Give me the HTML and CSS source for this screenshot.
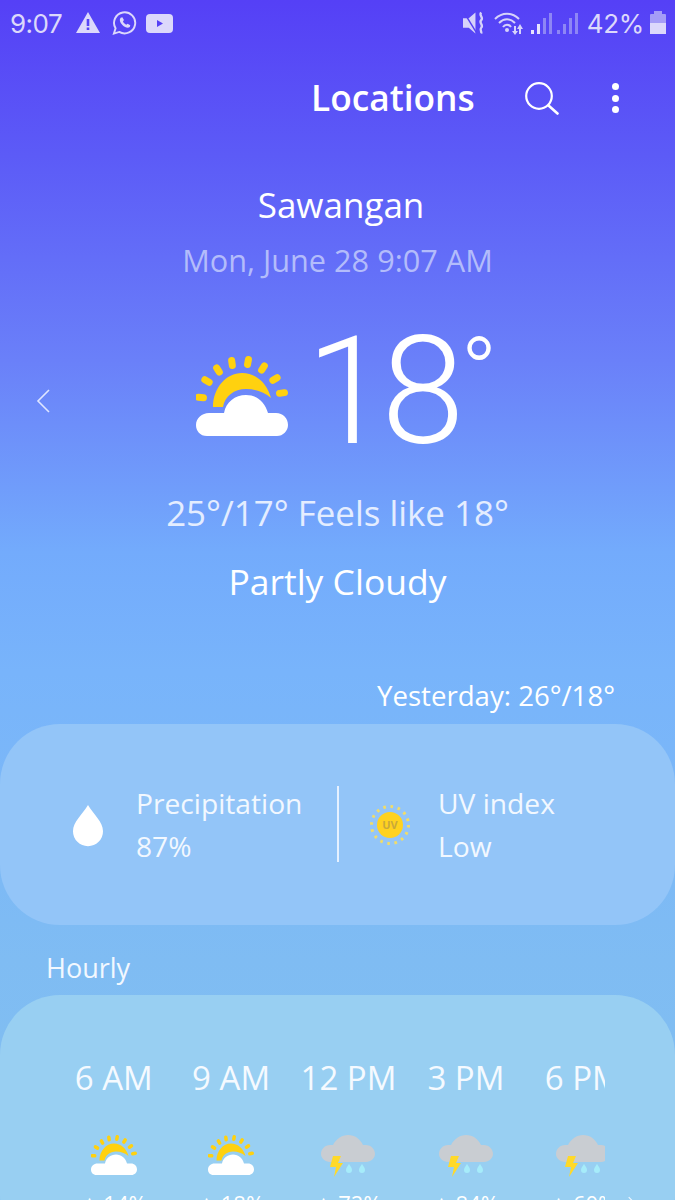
FILE: index.html
```html
<!DOCTYPE html>
<html lang="en">
<head>
<meta charset="utf-8">
<title>Weather</title>
<link rel="stylesheet" href="styles.css">
</head>
<body>
<svg class="defs" width="0" height="0" aria-hidden="true">
  <defs>
    <symbol id="partly" viewBox="0 0 92 80">
      <g fill="#ffd10f">
        <rect x="-1" y="38" width="12" height="7" rx="3.5" transform="rotate(5 5 41)"/>
        <rect x="5" y="21.500" width="12" height="7" rx="3.5" transform="rotate(30 11 25)"/>
        <rect x="16" y="10.500" width="12" height="7" rx="3.5" transform="rotate(58 22 14)"/>
        <rect x="30" y="3.500" width="12" height="7" rx="3.5" transform="rotate(82 36 7)"/>
        <rect x="46" y="2.500" width="12" height="7" rx="3.5" transform="rotate(-80 52 6)"/>
        <rect x="61" y="8.500" width="12" height="7" rx="3.5" transform="rotate(-57 67 12)"/>
        <rect x="73" y="19.500" width="12" height="7" rx="3.500" transform="rotate(-32 79 23)"/>
        <rect x="80" y="33.500" width="12" height="7" rx="3.500" transform="rotate(-8 86 37)"/>
        <path d="M17 51C17 32 30 17 46 17C60 17 71 27 75 42C68 36 60 33 50 33C38 33 29 40 27 51Z"/>
      </g>
      <path fill="#fff" d="M11 80C4 80 0 75 0 69C0 62 6 57 13 57H28C30 46 39 39 50 39C61 39 69 46 72 57H80C87 57 92 62 92 69C92 75 87 80 81 80Z"/>
    </symbol>
    <symbol id="storm" viewBox="0 0 54 42">
      <path fill="#c9cdd2" d="M9 27C4 27 0 23 0 19C0 14 4 10 9 10H12C15 4 21 0 27 0C34 0 39 4 42 10H45C50 10 54 14 54 19C54 23 50 27 45 27Z"/>
      <path fill="#ffd92a" d="M12 21H20L17 28H22L13 42L15 32H9Z"/>
      <path fill="#a6ecfa" d="M28 29C30 32 31 33 31 35A3 3 0 0 1 25 35C25 33 26 32 28 29ZM41 29C43 32 44 33 44 35A3 3 0 0 1 38 35C38 33 39 32 41 29Z"/>
    </symbol>
  </defs>
</svg>
<main class="screen">
  <header class="status">
    <div class="status-left">
      <span class="clock">9:07</span>
      <svg class="s-icon alert" viewBox="0 0 24 22"><path fill="#dcd8fb" fill-rule="evenodd" d="M12 0L24 21H0ZM10.700 7V14H13.300V7ZM10.700 15.500V18H13.300V15.500Z"/></svg>
      <svg class="s-icon wa" viewBox="0 0 26 26"><path fill="none" stroke="#dcd8fb" stroke-width="2" d="M2 24L3.700 18.500A11 11 0 1 1 7.500 22.300Z"/><path fill="#dcd8fb" d="M9 7.500L10.800 7L12.400 10L11.400 11.400C12 12.800 13.200 14 14.800 14.800L16.200 13.700L19 15.400L18.500 17.200C16.800 18.800 13.600 18 10.800 15.200C8 12.400 7.400 9.200 9 7.500Z"/></svg>
      <svg class="s-icon yt" viewBox="0 0 27 19"><rect width="27" height="19" rx="4" fill="#dcd8fb"/><path fill="#5540f5" d="M11 6L17 9.500L11 13Z"/></svg>
    </div>
    <div class="status-right">
      <svg class="s-icon mute" viewBox="0 0 24 24"><path fill="#d6d2fa" d="M0 7H6L13 1V23L6 17H0Z"/><path stroke="#5540f5" stroke-width="1.500" d="M1 1L14 22"/><path fill="none" stroke="#d6d2fa" stroke-width="2.400" d="M19 1C16 4 22 6 19 9C16 12 22 14 19 17C17 19 20 21 19 23"/></svg>
      <svg class="s-icon wifi" viewBox="0 0 30 24"><g fill="none" stroke="#d6d2fa" stroke-width="2"><path d="M1 8C8 1 18 1 25 8"/><path d="M5 12C10 7 16 7 21 12"/><path d="M9 16C11 13 15 13 17 16"/></g><circle cx="13" cy="19" r="2" fill="#d6d2fa"/><path fill="#d6d2fa" d="M20 15H22V20H24L21 24L18 20H20ZM26 13L29 18H27V23H25V18H23Z"/></svg>
      <span class="bars"><i class="b1 on"></i><i class="b2 on"></i><i class="b3"></i><i class="b4"></i></span>
      <span class="bars"><i class="b1"></i><i class="b2"></i><i class="b3"></i><i class="b4"></i></span>
      <span class="pct">42%</span>
      <span class="battery"><i></i></span>
    </div>
  </header>

  <nav class="toolbar">
    <span class="toolbar-title">Locations</span>
    <svg class="search" viewBox="0 0 34 33"><circle cx="14" cy="14" r="12.800" fill="none" stroke="#fff" stroke-width="2.200"/><path d="M23.500 23.500L32.500 31.500" stroke="#fff" stroke-width="2.600" stroke-linecap="round"/></svg>
    <span class="dots"><i></i><i></i><i></i></span>
  </nav>

  <section class="hero">
    <h1 class="city">Sawangan</h1>
    <p class="date">Mon, June 28 9:07 AM</p>
    <div class="now">
      <svg class="chev" viewBox="0 0 14 24"><path d="M13 1L2 12L13 23" fill="none" stroke="#dfe6ff" stroke-width="1.600"/></svg>
      <svg class="now-icon"><use href="#partly"/></svg>
      <span class="temp"><span>18</span><span class="deg">°</span></span>
    </div>
    <p class="feels">25°/17° Feels like 18°</p>
    <p class="cond">Partly Cloudy</p>
    <p class="yesterday">Yesterday: 26°/18°</p>
  </section>

  <section class="card stats">
    <div class="stat stat-a">
      <svg class="drop" viewBox="0 0 32 44"><path fill="#fff" d="M16 0C22 10 32 18 32 28A16 16 0 0 1 0 28C0 18 10 10 16 0Z"/></svg>
      <div class="stat-text"><span>Precipitation</span><span>87%</span></div>
    </div>
    <div class="stat stat-b">
      <span class="uv"><svg class="uv-rays" viewBox="0 0 40 40"><circle cx="20" cy="20" r="18.500" fill="none" stroke="#f0dc6a" stroke-width="3" stroke-dasharray="2.600 4.660"/></svg><b>UV</b></span>
      <div class="stat-text"><span>UV index</span><span>Low</span></div>
    </div>
  </section>

  <h2 class="hourly-label">Hourly</h2>

  <section class="card hourly">
    <div class="hours">
      <div class="hour"><span class="h-time">6 AM</span><svg class="h-icon h-sun"><use href="#partly"/></svg><span class="h-rain">&#9651; 14%</span></div>
      <div class="hour"><span class="h-time">9 AM</span><svg class="h-icon h-sun"><use href="#partly"/></svg><span class="h-rain">&#9651; 18%</span></div>
      <div class="hour"><span class="h-time">12 PM</span><svg class="h-icon"><use href="#storm"/></svg><span class="h-rain">&#9651; 72%</span></div>
      <div class="hour"><span class="h-time">3 PM</span><svg class="h-icon"><use href="#storm"/></svg><span class="h-rain">&#9651; 84%</span></div>
      <div class="hour"><span class="h-time">6 PM</span><svg class="h-icon"><use href="#storm"/></svg><span class="h-rain">&#9651; 60%</span></div>
    </div>
    <svg class="more" viewBox="0 0 14 24"><path d="M1 1L12 12L1 23" fill="none" stroke="#eef7ff" stroke-width="1.600"/></svg>
  </section>
</main>
</body>
</html>
```

FILE: styles.css
```css
* { box-sizing: border-box; }
html, body { margin: 0; padding: 0; }
body { width: 675px; height: 1200px; overflow: hidden; font-family: "Open Sans", "Noto Sans", sans-serif; color: #fff; }
.defs { display: block; height: 0; }
p, h1, h2 { margin: 0; font-weight: 400; }
.screen {
  width: 675px; height: 1200px; overflow: hidden; display: flex; flex-direction: column;
  background: linear-gradient(180deg, #5540f6 0%, #5c5bf7 13%, #6a80f9 30%, #73abfc 46%, #78b4fb 56%, #7fbcf3 80%, #82c0f0 100%);
}
.status { height: 44px; flex: none; display: flex; justify-content: space-between; align-items: center; padding: 2px 9px 0 10px; color: #dcd8fb; }
.status-left, .status-right { display: flex; align-items: center; }
.clock { font-family: Inter, sans-serif; font-size: 26px; letter-spacing: -0.5px; margin-right: 14px; }
.s-icon { display: block; flex: none; }
.alert { width: 24px; height: 22px; margin-right: 12px; }
.wa { width: 25px; height: 26px; margin-right: 9px; }
.yt { width: 27px; height: 19px; }
.mute { width: 23px; height: 24px; margin-right: 8px; }
.wifi { width: 30px; height: 24px; }
.bars { display: flex; align-items: flex-end; gap: 3px; height: 21px; margin-left: 7px; width: 21px; }
.bars + .bars { margin-left: 5px; }
.bars i { display: block; width: 3px; background: #8e86f5; }
.bars i.on { background: #e6e3fd; }
.b1 { height: 4px; } .b2 { height: 10px; } .b3 { height: 16px; } .b4 { height: 21px; }
.pct { font-family: Inter, sans-serif; font-size: 26px; letter-spacing: -0.3px; margin-left: 9px; }
.battery { display: block; position: relative; width: 16px; height: 20px; margin: 1px 0 0 6px; background: #a59df7; border-radius: 1px; }
.battery::before { content: ""; position: absolute; left: 4px; top: -3px; width: 8px; height: 3px; background: #a59df7; }
.battery i { position: absolute; left: 0; right: 0; bottom: 0; height: 11px; background: #dcd8fb; }

.toolbar { height: 108px; flex: none; display: flex; align-items: center; padding-left: 311px; }
.toolbar-title { flex: 0 0 163px; font-size: 35.3px; font-weight: 600; line-height: 1; margin-right: 51px; white-space: nowrap; min-width: 0; }
.search { width: 34px; height: 33px; margin-right: 53px; }
.dots { display: flex; flex-direction: column; gap: 4.5px; }
.dots i { display: block; width: 7px; height: 7px; border-radius: 50%; background: #fff; }

.hero { display: flex; flex-direction: column; align-items: center; flex: none; }
.city { font-size: 35px; line-height: 48px; margin: 29px 0 0 7px; }
.date { font-size: 30.7px; line-height: 40px; margin-top: 11px; color: #b3bcfb; }
.now { position: relative; width: 100%; height: 120px; margin-top: 50px; }
.chev { position: absolute; left: 36px; top: 59px; width: 14px; height: 24px; }
.now-icon { position: absolute; left: 196px; top: 26px; width: 92px; height: 80px; }
.temp { position: absolute; left: 306px; top: -33px; display: flex; align-items: flex-start; font-family: Roboto, sans-serif; font-size: 150px; line-height: 190px; font-weight: 300; letter-spacing: -8px; white-space: nowrap; }
.deg { font-size: 98px; line-height: 110px; letter-spacing: 0; margin: 22px 0 0 4px; }
.feels { font-size: 34.9px; line-height: 44px; margin-top: 41px; color: #e4edff; }
.cond { font-size: 35.5px; line-height: 46px; margin-top: 23px; }
.yesterday { font-size: 27.6px; line-height: 36px; align-self: flex-end; margin: 73px 60px 0 0; }

.card { flex: none; background: rgba(255,255,255,0.2); }
.stats { height: 201px; margin-top: 11px; border-radius: 60px; position: relative; display: flex; background: #93c5f8; }
.stats::before { content: ""; position: absolute; left: 337px; top: 62px; width: 1.5px; height: 76px; background: #e6f1ff; }
.stat { display: flex; align-items: center; }
.stat-a { width: 337px; padding-left: 73px; }
.stat-b { flex: 1; padding-left: 33px; }
.drop { width: 30px; height: 43px; margin: 1px 33px 0 0; }
.stat-text { display: flex; flex-direction: column; font-size: 28.2px; line-height: 43px; color: #f2f8ff; }
.uv { position: relative; display: block; width: 40px; height: 40px; margin: 0 28px 0 0; }
.uv-rays { position: absolute; inset: 0; width: 40px; height: 40px; }
.uv b { position: absolute; left: 7px; top: 7px; width: 26px; height: 26px; border-radius: 50%; background: #ffd21f; color: #c9a93a; font-size: 11px; line-height: 26px; font-weight: 700; text-align: center; }

.hourly-label { font-size: 27px; line-height: 36px; margin: 25px 0 0 46px; color: #f2f8ff; }
.hourly { position: relative; height: 260px; margin-top: 9px; border-radius: 60px; background: #98cff2; padding: 0 70px 0 55px; }
.hours { display: flex; overflow: hidden; width: 550px; height: 260px; }
.hour { flex: 0 0 117.4px; display: flex; flex-direction: column; align-items: center; padding-top: 61px; }
.h-time { font-size: 33px; line-height: 44px; white-space: nowrap; color: #f5faff; }
.h-icon { width: 54px; height: 42px; margin: 35px 0 0; display: block; flex: none; }
.h-sun { width: 46px; height: 40px; margin-bottom: 2px; }
.h-rain { font-size: 22px; line-height: 28px; margin-top: 12px; white-space: nowrap; }
.more { position: absolute; left: 628px; top: 201px; width: 10px; height: 18px; }
```
